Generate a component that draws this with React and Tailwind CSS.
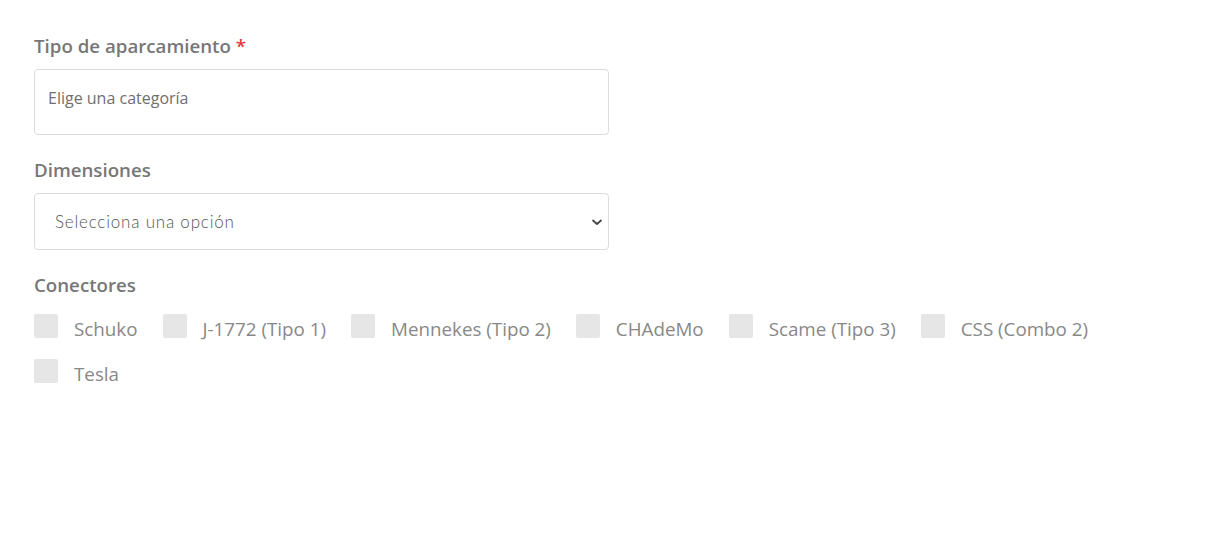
import React from "react";

const connectors = [
  "Schuko",
  "J-1772 (Tipo 1)",
  "Mennekes (Tipo 2)",
  "CHAdeMo",
  "Scame (Tipo 3)",
  "CSS (Combo 2)",
  "Tesla",
];

export default function App() {
  return (
    <div className="min-h-[544px] w-full bg-white font-['Open_Sans',sans-serif]">
      <div className="w-[1100px] pl-[34px] pt-[33px]">
        <div className="text-[18.7px] font-semibold leading-[26px] text-[#777]">
          Tipo de aparcamiento <span className="text-[#e0383a]">*</span>
        </div>
        <div className="mt-[10px] flex h-[66px] w-[575px] items-center rounded-[4px] border border-[#dcdcdc] px-[13px] pb-[8px]">
          <span className="text-[16px] text-[#6f6f6f]">Elige una categoría</span>
        </div>

        <div className="mt-[22px] text-[18.7px] font-semibold leading-[26px] text-[#777]">
          Dimensiones
        </div>
        <div className="mt-[10px] flex h-[57px] w-[575px] items-center justify-between rounded-[4px] border border-[#dcdcdc] pl-[20px] pr-[2px]">
          <span className="font-['Lato',sans-serif] text-[17px] font-light tracking-[0.8px] text-[#555]">
            Selecciona una opción
          </span>
          <svg width="14" height="16" viewBox="0 0 14 16" className="mr-[2px]">
            <path d="M3 6.5 L7 10 L11 6.5" fill="none" stroke="#444" strokeWidth="1.8" strokeLinecap="round" strokeLinejoin="round" />
          </svg>
        </div>

        <div className="mt-[22px] text-[18.7px] font-semibold leading-[26px] text-[#777]">
          Conectores
        </div>
        <div className="mt-[16px] flex w-[1100px] flex-wrap gap-x-[25px] gap-y-[21px]">
          {connectors.map((c) => (
            <label key={c} className="flex h-[24px] items-start gap-[16px]">
              <span className="h-[24px] w-[24px] rounded-[2px] bg-[#e6e6e6]" />
              <span className="mt-[2px] text-[18.8px] leading-[26px] text-[#888]">{c}</span>
            </label>
          ))}
        </div>
      </div>
    </div>
  );
}
